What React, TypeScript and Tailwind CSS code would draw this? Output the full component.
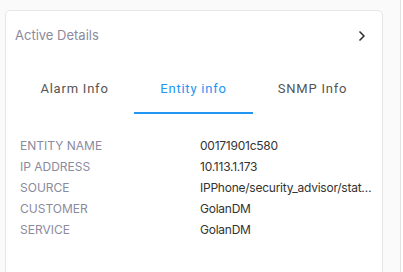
import React, { useState } from 'react';
import { ChevronRight } from 'lucide-react';

const rows = [
  { label: 'ENTITY NAME', value: '00171901c580' },
  { label: 'IP ADDRESS', value: '10.113.1.173' },
  { label: 'SOURCE', value: 'IPPhone/security_advisor/status/something' },
  { label: 'CUSTOMER', value: 'GolanDM' },
  { label: 'SERVICE', value: 'GolanDM' },
];

const tabs = ['Alarm Info', 'Entity info', 'SNMP Info'];

export default function App() {
  const [active, setActive] = useState(1);

  return (
    <div className="flex h-[272px] w-[403px] overflow-hidden bg-[#fafafa] font-['Inter',sans-serif]">
      <div className="flex-1 pl-[5px] pt-[10px]">
        <div className="h-[300px] w-[378px] rounded-[5px] border border-[#e6e6e6] bg-white px-[9px]">
          {/* header */}
          <div className="flex h-[48px] items-center justify-between pt-[2px]">
            <span className="text-[13px] text-[#8b8a9e]">Active Details</span>
            <ChevronRight className="mr-[3px] h-[16px] w-[16px] text-[#333]" strokeWidth={2.5} />
          </div>

          {/* tabs */}
          <div className="mt-[9px] flex w-[357px]">
            {tabs.map((t, i) => (
              <button
                key={t}
                onClick={() => setActive(i)}
                className={`flex h-[46px] flex-1 items-center justify-center border-b-2 pb-[2px] font-['Roboto',sans-serif] text-[13px] tracking-[0.06em] ${
                  active === i ? 'border-[#2196f3] text-[#2196f3]' : 'border-transparent text-[#555]'
                }`}
              >
                {t}
              </button>
            ))}
          </div>

          {/* details */}
          <div className="mt-[21px] flex flex-col pl-[5px]">
            {rows.map((r) => (
              <div key={r.label} className="flex h-[21px] items-center text-[12px]">
                <span className="w-[180px] shrink-0 text-[#8b8a9e]">{r.label}</span>
                <span className="w-[178px] truncate tracking-[-0.02em] text-[#333]">{r.value}</span>
              </div>
            ))}
          </div>
        </div>
      </div>
      <div className="ml-[17px] w-px bg-[#e3e3e3]" />
      <div className="w-[2px] bg-white" />
    </div>
  );
}
